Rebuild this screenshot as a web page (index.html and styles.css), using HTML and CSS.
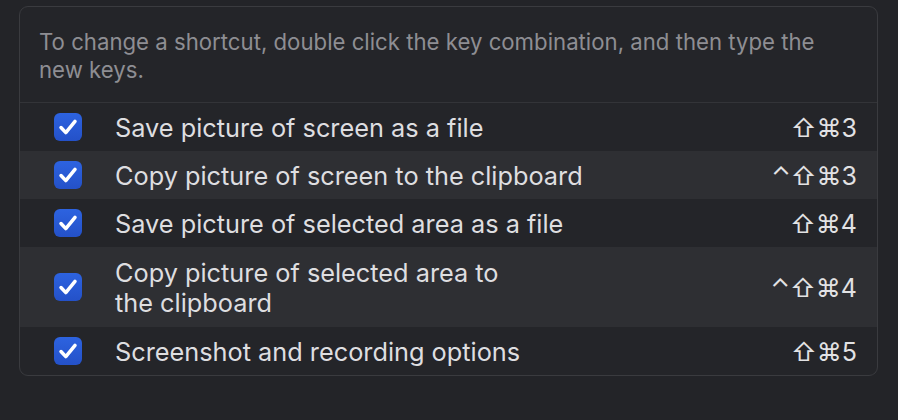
FILE: index.html
```html
<!DOCTYPE html>
<html>
<head>
<meta charset="utf-8">
<link rel="stylesheet" href="styles.css">
</head>
<body>
<div class="panel">
  <p class="intro">To change a shortcut, double click the key combination, and then type the new keys.</p>
  <div class="list">
    <div class="row">
      <span class="check"><svg viewBox="0 0 28 28" width="28" height="28"><path d="M7 14.5 L11.8 19.6 L21 8.4" fill="none" stroke="#fff" stroke-width="3.5" stroke-linecap="round" stroke-linejoin="round"/></svg></span>
      <span class="label">Save picture of screen as a file</span>
      <span class="keys">⇧⌘3</span>
    </div>
    <div class="row alt">
      <span class="check"><svg viewBox="0 0 28 28" width="28" height="28"><path d="M7 14.5 L11.8 19.6 L21 8.4" fill="none" stroke="#fff" stroke-width="3.5" stroke-linecap="round" stroke-linejoin="round"/></svg></span>
      <span class="label">Copy picture of screen to the clipboard</span>
      <span class="keys">⌃⇧⌘3</span>
    </div>
    <div class="row">
      <span class="check"><svg viewBox="0 0 28 28" width="28" height="28"><path d="M7 14.5 L11.8 19.6 L21 8.4" fill="none" stroke="#fff" stroke-width="3.5" stroke-linecap="round" stroke-linejoin="round"/></svg></span>
      <span class="label">Save picture of selected area as a file</span>
      <span class="keys">⇧⌘4</span>
    </div>
    <div class="row alt tall">
      <span class="check"><svg viewBox="0 0 28 28" width="28" height="28"><path d="M7 14.5 L11.8 19.6 L21 8.4" fill="none" stroke="#fff" stroke-width="3.5" stroke-linecap="round" stroke-linejoin="round"/></svg></span>
      <span class="label">Copy picture of selected area to<br>the clipboard</span>
      <span class="keys">⌃⇧⌘4</span>
    </div>
    <div class="row">
      <span class="check"><svg viewBox="0 0 28 28" width="28" height="28"><path d="M7 14.5 L11.8 19.6 L21 8.4" fill="none" stroke="#fff" stroke-width="3.5" stroke-linecap="round" stroke-linejoin="round"/></svg></span>
      <span class="label">Screenshot and recording options</span>
      <span class="keys">⇧⌘5</span>
    </div>
  </div>
</div>
</body>
</html>
```

FILE: styles.css
```css
html, body {
  margin: 0;
  padding: 0;
  background: #232428;
}
body {
  padding: 6px 20px 0 19px;
  font-family: Inter, "Liberation Sans", sans-serif;
}
.panel {
  width: 857px;
  border: 1px solid #3a3b3f;
  border-radius: 9px;
  background: #242529;
  overflow: hidden;
}
.intro {
  margin: 0;
  padding: 21px 40px 18px 19px;
  font-size: 22.2px;
  line-height: 28px;
  color: #8e8e93;
  border-bottom: 1px solid #333438;
}
.row {
  display: flex;
  align-items: center;
  height: 48px;
  padding: 0 20px 0 34px;
}
.row.tall {
  height: 80px;
}
.row.alt {
  background: #2e2f33;
}
.check {
  width: 28px;
  height: 28px;
  border-radius: 6px;
  background: linear-gradient(#2d63e0, #2451c8);
  flex: none;
  display: flex;
}
.label {
  flex: 1;
  margin-left: 33px;
  padding-top: 2px;
  font-size: 25.3px;
  line-height: 30px;
  color: #dedee0;
}
.keys {
  padding-top: 2px;
  font-size: 25px;
  color: #e2e2e4;
  font-family: Inter, "DejaVu Sans", sans-serif;
}
```
